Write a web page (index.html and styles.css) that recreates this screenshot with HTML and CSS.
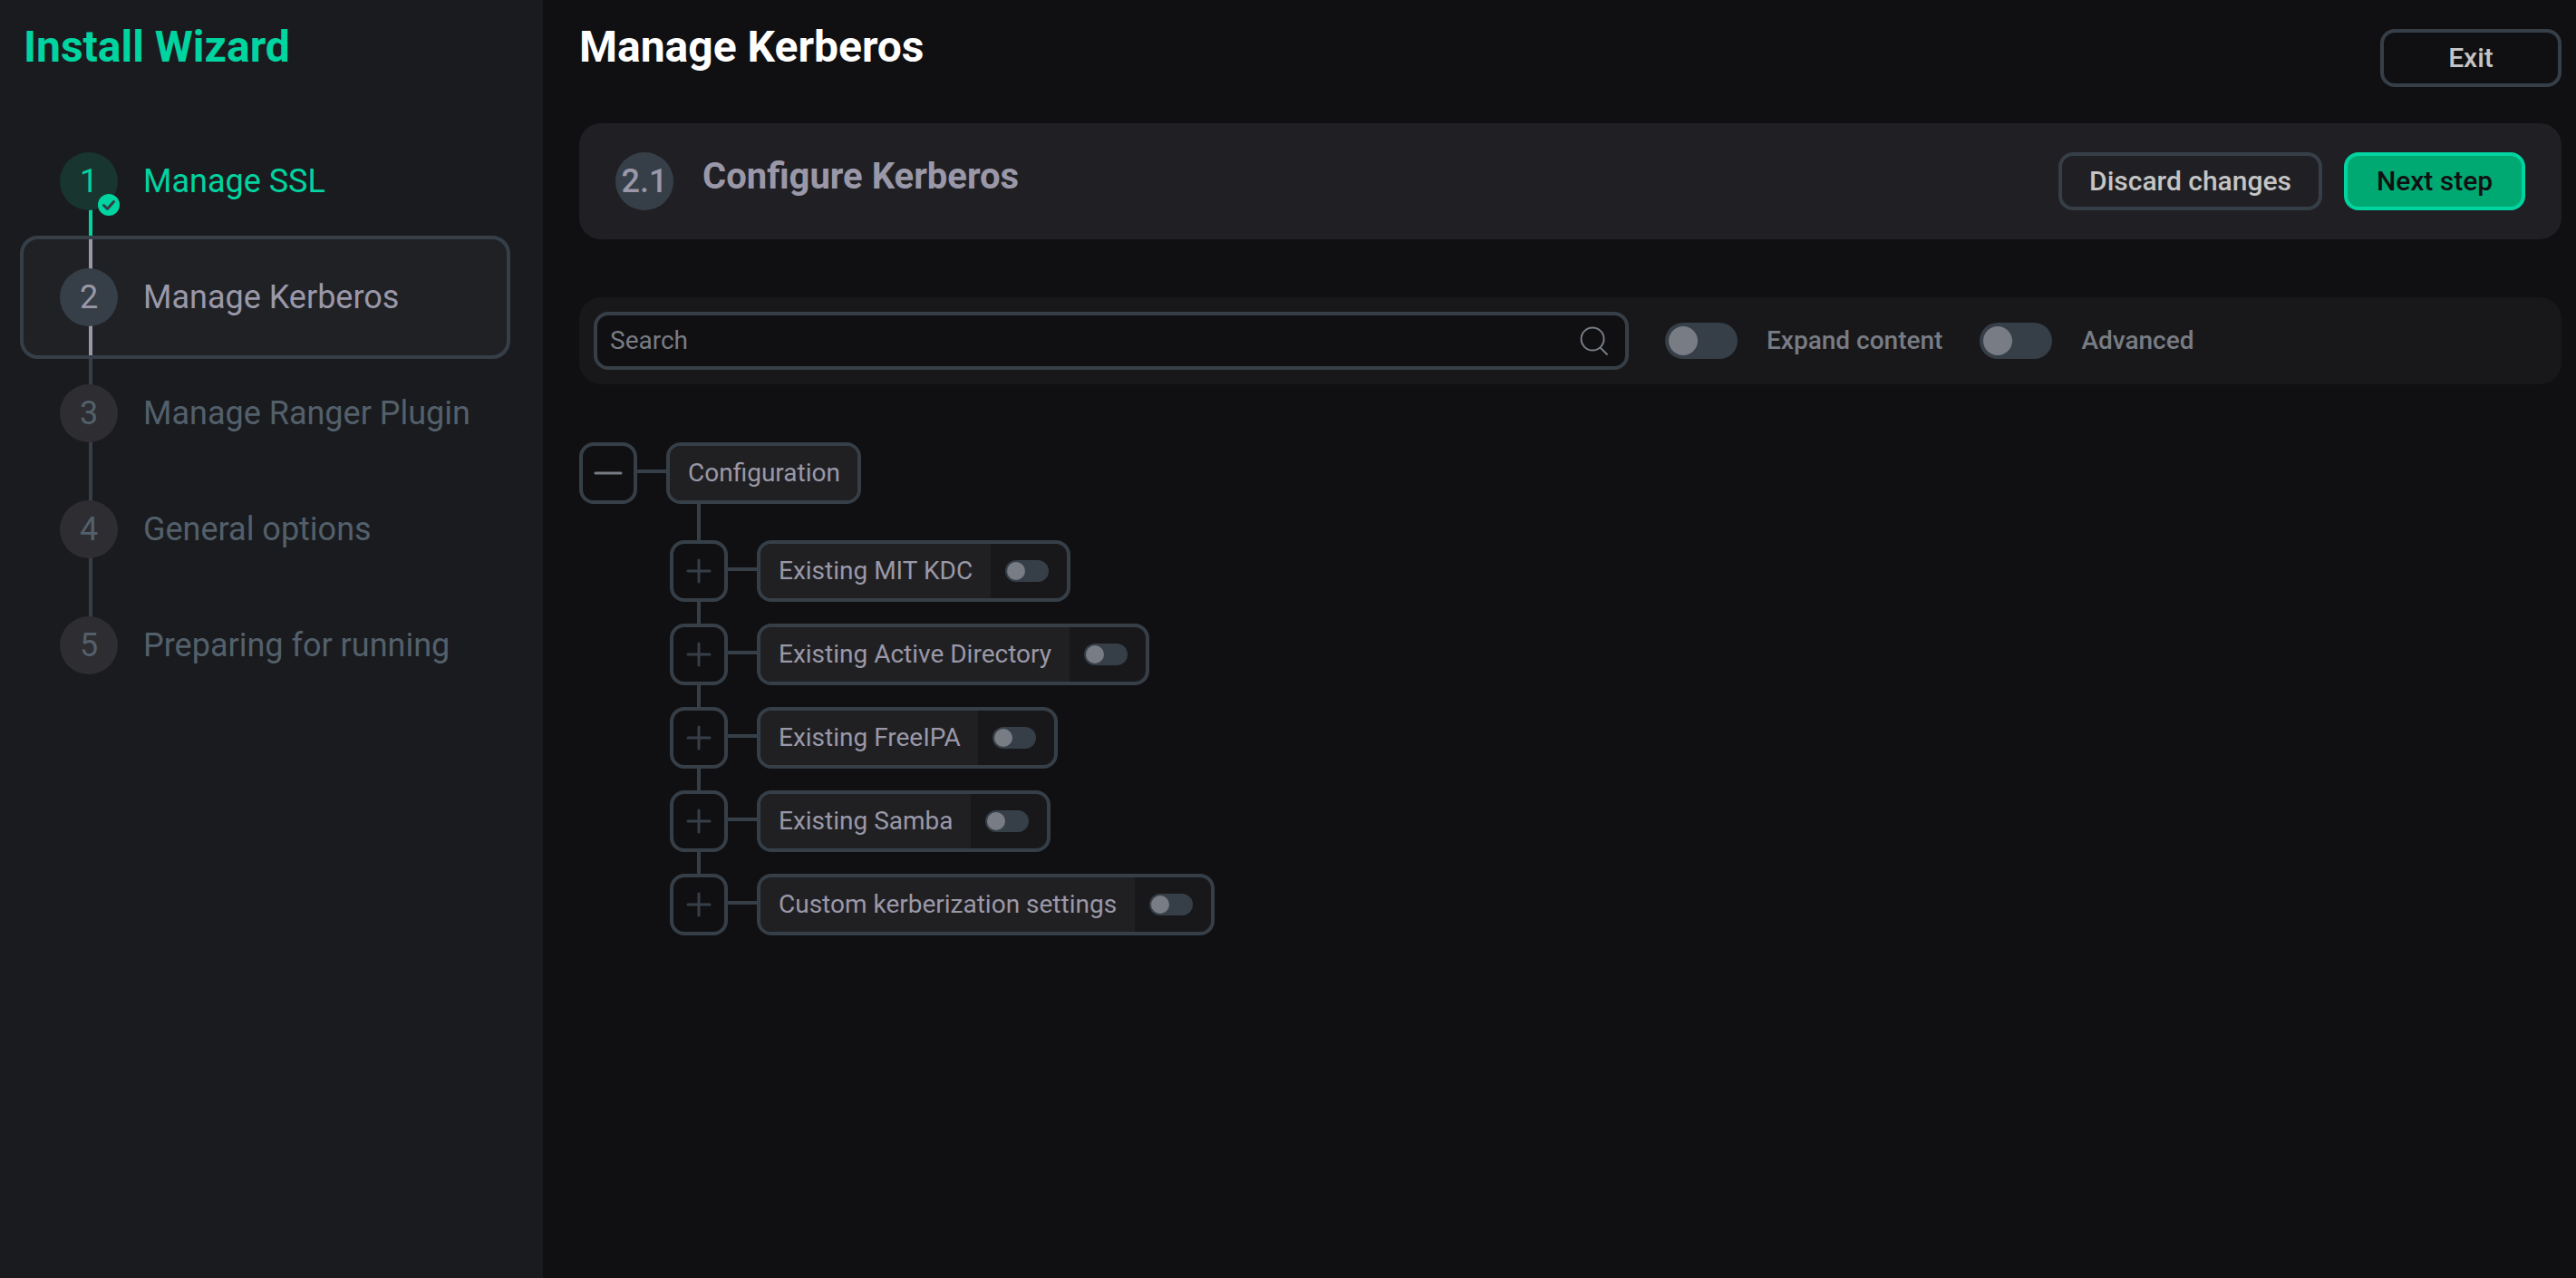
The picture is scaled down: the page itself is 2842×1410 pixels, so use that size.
FILE: index.html
```html
<!DOCTYPE html>
<html lang="en">
<head>
    <meta charset="utf-8">
    <title>Install Wizard</title>
    <link rel="stylesheet" href="styles.css">
</head>
<body>
    <div class="layout">
        <aside class="sidebar">
            <h1 class="sidebar-title">Install Wizard</h1>
            <ul class="steps">
                <li class="step done">
                    <span class="step-number">1
                        <svg class="step-check" viewBox="0 0 24 24"><circle cx="12" cy="12" r="12" fill="#00d4a0"/><path d="M6.500 12.500l4 4L17.500 8.500" fill="none" stroke="#353d47" stroke-width="3" stroke-linecap="round" stroke-linejoin="round"/></svg>
                    </span>
                    <span class="step-label">Manage SSL</span>
                </li>
                <li class="step active">
                    <span class="step-number">2</span>
                    <span class="step-label">Manage Kerberos</span>
                </li>
                <li class="step">
                    <span class="step-number">3</span>
                    <span class="step-label">Manage Ranger Plugin</span>
                </li>
                <li class="step">
                    <span class="step-number">4</span>
                    <span class="step-label">General options</span>
                </li>
                <li class="step">
                    <span class="step-number">5</span>
                    <span class="step-label">Preparing for running</span>
                </li>
            </ul>
        </aside>

        <main class="content">
            <header class="page-header">
                <h1 class="page-title">Manage Kerberos</h1>
                <button class="btn btn-exit">Exit</button>
            </header>

            <section class="step-card">
                <span class="step-card-number">2.1</span>
                <h2 class="step-card-title">Configure Kerberos</h2>
                <button class="btn">Discard changes</button>
                <button class="btn btn-primary">Next step</button>
            </section>

            <section class="toolbar">
                <div class="search">
                    <input class="search-input" type="text" placeholder="Search">
                    <svg class="search-icon" viewBox="0 0 32 32"><circle cx="14" cy="14" r="12.500"/><path d="M22.500 23.500l8 8"/></svg>
                </div>
                <span class="toggle"></span>
                <span class="toggle-label">Expand content</span>
                <span class="toggle"></span>
                <span class="toggle-label">Advanced</span>
            </section>

            <div class="tree">
                <div class="tree-row">
                    <button class="tree-btn opened"><svg viewBox="0 0 32 32"><path d="M2 16h28"/></svg></button>
                    <div class="tree-node"><span class="tree-name">Configuration</span></div>
                </div>
                <div class="tree-children">
                    <div class="tree-row">
                        <button class="tree-btn"><svg viewBox="0 0 32 32"><path d="M4 16h24M16 4v24"/></svg></button>
                        <div class="tree-node"><span class="tree-name">Existing MIT KDC</span><span class="tree-switch"><span class="toggle small"></span></span></div>
                    </div>
                    <div class="tree-row">
                        <button class="tree-btn"><svg viewBox="0 0 32 32"><path d="M4 16h24M16 4v24"/></svg></button>
                        <div class="tree-node"><span class="tree-name">Existing Active Directory</span><span class="tree-switch"><span class="toggle small"></span></span></div>
                    </div>
                    <div class="tree-row">
                        <button class="tree-btn"><svg viewBox="0 0 32 32"><path d="M4 16h24M16 4v24"/></svg></button>
                        <div class="tree-node"><span class="tree-name">Existing FreeIPA</span><span class="tree-switch"><span class="toggle small"></span></span></div>
                    </div>
                    <div class="tree-row">
                        <button class="tree-btn"><svg viewBox="0 0 32 32"><path d="M4 16h24M16 4v24"/></svg></button>
                        <div class="tree-node"><span class="tree-name">Existing Samba</span><span class="tree-switch"><span class="toggle small"></span></span></div>
                    </div>
                    <div class="tree-row">
                        <button class="tree-btn"><svg viewBox="0 0 32 32"><path d="M4 16h24M16 4v24"/></svg></button>
                        <div class="tree-node"><span class="tree-name">Custom kerberization settings</span><span class="tree-switch"><span class="toggle small"></span></span></div>
                    </div>
                </div>
            </div>
        </main>
    </div>
</body>
</html>
```

FILE: styles.css
```css
* {
    box-sizing: border-box;
}
body {
    margin: 0;
    background: #101012;
    color: #9a98a8;
    font-family: Roboto, sans-serif;
    font-size: 28px;
}
h1, h2, ul {
    margin: 0;
    padding: 0;
    list-style: none;
}
.layout {
    display: flex;
    min-height: 100vh;
}

/* sidebar */
.sidebar {
    width: 599px;
    flex-shrink: 0;
    background: #1a1b1e;
}
.sidebar-title {
    height: 136px;
    padding: 24px 26px 0;
    color: #00d4a0;
    font-size: 48px;
    line-height: 56px;
}
.step {
    position: relative;
    display: flex;
    align-items: center;
    gap: 28px;
    height: 128px;
    padding-left: 66px;
    color: #53606b;
    font-size: 36px;
}
.step::before {
    content: "";
    position: absolute;
    left: 98px;
    top: 0;
    bottom: 0;
    width: 4px;
    background: #363f48;
}
.step:first-child::before {
    top: 50%;
}
.step:last-child::before {
    bottom: 50%;
}
.step-number {
    position: relative;
    width: 64px;
    height: 64px;
    border-radius: 50%;
    background: #2e2d31;
    text-align: center;
    line-height: 64px;
}
.step.done {
    color: #00d4a0;
}
.step.done::before {
    background: #00d4a0;
}
.step.done .step-number {
    background: #183530;
}
.step-check {
    position: absolute;
    right: -2px;
    bottom: -6px;
    width: 24px;
    height: 24px;
}
.step.active {
    height: 136px;
    margin: -4px 36px -4px 22px;
    padding-left: 40px;
    border: 4px solid #363f48;
    border-radius: 20px;
    background: #202125;
    color: #9a98a8;
}
.step.active::before {
    left: 72px;
    background: #9a98a8;
}
.step.active .step-number {
    background: #363f48;
}

/* content */
.content {
    flex: 1;
    padding: 0 16px 0 40px;
}
.page-header {
    display: flex;
    justify-content: space-between;
    height: 136px;
}
.page-title {
    padding-top: 24px;
    color: #fff;
    font-size: 48px;
    line-height: 56px;
}
.btn {
    height: 64px;
    min-width: 200px;
    padding: 0 30px 2px;
    border: 4px solid #363f48;
    border-radius: 16px;
    background: transparent;
    color: #c4c4c4;
    font: 500 30px Roboto, sans-serif;
}
.btn-exit {
    margin-top: 32px;
}
.btn-primary {
    border-color: #00d4a0;
    background: #00a972;
    color: #101012;
}
.step-card {
    display: flex;
    align-items: center;
    gap: 24px;
    height: 128px;
    padding: 0 40px;
    border-radius: 24px;
    background: #202024;
}
.step-card-number {
    width: 64px;
    height: 64px;
    border-radius: 50%;
    background: #363f48;
    font-size: 36px;
    font-weight: 500;
    line-height: 64px;
    text-align: center;
}
.step-card-title {
    flex: 1;
    padding: 0 0 12px 8px;
    font-size: 40px;
}
.toolbar {
    display: flex;
    align-items: center;
    height: 96px;
    margin-top: 64px;
    padding: 0 16px;
    border-radius: 24px;
    background: #18181a;
    color: #787c84;
}
.search {
    display: flex;
    align-items: center;
    width: 1142px;
    height: 64px;
    padding: 0 18px 0 14px;
    border: 4px solid #363f48;
    border-radius: 16px;
    background: #101012;
}
.search-input {
    flex: 1;
    padding: 0 0 2px;
    border: none;
    outline: none;
    background: transparent;
    font: 28px Roboto, sans-serif;
}
.search-input::placeholder {
    color: #787c84;
}
.search-icon {
    width: 32px;
    height: 32px;
    fill: none;
    stroke: #787c84;
    stroke-width: 2;
}
.toggle {
    width: 80px;
    height: 40px;
    margin: 0 32px 0 40px;
    padding: 4px;
    border-radius: 20px;
    background: #363f48;
}
.toggle::before {
    content: "";
    display: block;
    width: 32px;
    height: 32px;
    border-radius: 50%;
    background: #787c84;
}
.toggle.small {
    width: 48px;
    height: 24px;
    margin: 0;
    padding: 2px;
}
.toggle.small::before {
    width: 20px;
    height: 20px;
}
.toggle-label {
    padding: 0 1px 2px 0;
    font-weight: 500;
}

/* tree */
.tree {
    margin-top: 64px;
}
.tree-row {
    display: flex;
    height: 68px;
}
.tree-btn {
    display: flex;
    align-items: center;
    justify-content: center;
    width: 64px;
    padding: 0;
    border: 4px solid #363f48;
    border-radius: 16px;
    background: transparent;
}
.tree-btn svg {
    width: 32px;
    height: 32px;
    stroke: #363f48;
    stroke-width: 3;
    stroke-linecap: round;
}
.tree-btn.opened svg {
    stroke: #787c84;
}
.tree-row::before {
    content: "";
    order: 1;
    width: 32px;
    height: 4px;
    margin-top: 30px;
    background: #363f48;
}
.tree-node {
    display: flex;
    order: 2;
    overflow: hidden;
    border: 4px solid #363f48;
    border-radius: 16px;
    background: #18181a;
}
.tree-name {
    padding: 0 19.500px 0 20px;
    background: #202022;
    line-height: 60px;
}
.tree-switch {
    display: flex;
    align-items: center;
    padding: 0 20px 0 16px;
}
.tree-children {
    padding-left: 100px;
}
.tree-children .tree-row {
    position: relative;
    margin-top: 24px;
}
.tree-children .tree-row:first-child {
    margin-top: 40px;
}
/* buttons come before the connector */
.tree-row .tree-btn {
    order: 0;
}
/* vertical line up to the previous node */
.tree-children .tree-row::after {
    content: "";
    position: absolute;
    left: 30px;
    bottom: 100%;
    width: 4px;
    height: 24px;
    background: #363f48;
}
.tree-children .tree-row:first-child::after {
    height: 40px;
}
```
